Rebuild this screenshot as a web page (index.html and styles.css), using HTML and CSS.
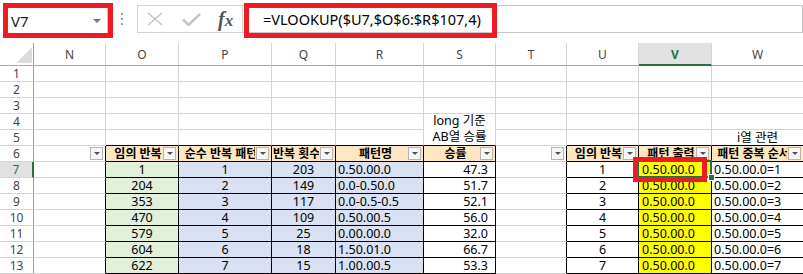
FILE: index.html
```html
<!DOCTYPE html>
<html lang="ko">
<head>
	<meta charset="UTF-8">
	<title>VLOOKUP</title>
	<link rel="stylesheet" href="styles.css">
</head>
<body>
	<div class="fbar">
		<div class="namebox"><span>V7</span><i class="caret"></i></div>
		<div class="grip"><i></i><i></i><i></i></div>
		<div class="fbtns">
			<svg class="ico-x" width="16" height="14" viewBox="0 0 16 14"><path d="M1 1L15 13M15 1L1 13" stroke="#c6c6c6" stroke-width="1.6" fill="none"/></svg>
			<svg class="ico-ok" width="19" height="13" viewBox="0 0 19 13"><path d="M1 6.5L6.5 12L18 1" stroke="#c6c6c6" stroke-width="2.6" fill="none"/></svg>
			<span class="fx">f<span>x</span></span>
		</div>
		<div class="finput">=VLOOKUP($U7,$O$6:$R$107,4)</div>
	</div>

	<div class="sheet">
		<div class="row head">
			<div class="corner"><i></i></div>
			<div class="col">N</div><div class="col">O</div><div class="col">P</div><div class="col">Q</div><div class="col">R</div>
			<div class="col">S</div><div class="col">T</div><div class="col">U</div><div class="col sel">V</div><div class="col">W</div>
		</div>
		<div class="row">
			<div class="rh">1</div>
			<div class="c"></div><div class="c"></div><div class="c"></div><div class="c"></div><div class="c"></div>
			<div class="c"></div><div class="c"></div><div class="c"></div><div class="c"></div><div class="c"></div>
		</div>
		<div class="row">
			<div class="rh">2</div>
			<div class="c"></div><div class="c"></div><div class="c"></div><div class="c"></div><div class="c"></div>
			<div class="c"></div><div class="c"></div><div class="c"></div><div class="c"></div><div class="c"></div>
		</div>
		<div class="row">
			<div class="rh">3</div>
			<div class="c"></div><div class="c"></div><div class="c"></div><div class="c"></div><div class="c"></div>
			<div class="c"></div><div class="c"></div><div class="c"></div><div class="c"></div><div class="c"></div>
		</div>
		<div class="row">
			<div class="rh">4</div>
			<div class="c"></div><div class="c"></div><div class="c"></div><div class="c"></div><div class="c"></div>
			<div class="c nob"></div><div class="c"></div><div class="c"></div><div class="c"></div><div class="c"></div>
		</div>
		<div class="row">
			<div class="rh">5</div>
			<div class="c"></div><div class="c t-t"></div><div class="c t-t"></div><div class="c t-t"></div><div class="c t-t"></div>
			<div class="c t-t wrap"><span>long 기준</span><span>AB열 승률</span></div>
			<div class="c"></div><div class="c t-t"></div><div class="c t-t"></div><div class="c t-t ctr">i열 관련</div>
		</div>
		<div class="row">
			<div class="rh">6</div>
			<div class="c hd t-l"><span class="lbl"></span><b class="fb"></b></div>
			<div class="c hd t"><span class="lbl"><span>임의 반복</span></span><b class="fb"></b></div>
			<div class="c hd t"><span class="lbl"><span>순수 반복 패턴</span></span><b class="fb"></b></div>
			<div class="c hd t"><span class="lbl left"><span>반복 횟수</span></span><b class="fb"></b></div>
			<div class="c hd t"><span class="lbl"><span>패턴명</span></span><b class="fb"></b></div>
			<div class="c hd t"><span class="lbl"><span>승률</span></span><b class="fb"></b></div>
			<div class="c hd t-l"><span class="lbl"></span><b class="fb"></b></div>
			<div class="c hd t"><span class="lbl"><span>임의 반복</span></span><b class="fb"></b></div>
			<div class="c hd t"><span class="lbl"><span>패턴 출력</span></span><b class="fb"></b></div>
			<div class="c hd t"><span class="lbl"><span>패턴 중복 순서</span></span><b class="fb"></b></div>
		</div>
		<div class="row">
			<div class="rh sel">7</div>
			<div class="c t-l"></div>
			<div class="c t g ctr">1</div><div class="c t b ctr">1</div><div class="c t b ctr">203</div><div class="c t b">0.50.00.0</div><div class="c t num">47.3</div>
			<div class="c t-l"></div>
			<div class="c t ctr">1</div><div class="c t y active">0.50.00.0</div><div class="c t">0.50.00.0=1</div>
		</div>
		<div class="row">
			<div class="rh">8</div>
			<div class="c t-l"></div>
			<div class="c t g ctr">204</div><div class="c t b ctr">2</div><div class="c t b ctr">149</div><div class="c t b">0.0-0.50.0</div><div class="c t num">51.7</div>
			<div class="c t-l"></div>
			<div class="c t ctr">2</div><div class="c t y">0.50.00.0</div><div class="c t">0.50.00.0=2</div>
		</div>
		<div class="row">
			<div class="rh">9</div>
			<div class="c t-l"></div>
			<div class="c t g ctr">353</div><div class="c t b ctr">3</div><div class="c t b ctr">117</div><div class="c t b">0.0-0.5-0.5</div><div class="c t num">52.1</div>
			<div class="c t-l"></div>
			<div class="c t ctr">3</div><div class="c t y">0.50.00.0</div><div class="c t">0.50.00.0=3</div>
		</div>
		<div class="row">
			<div class="rh">10</div>
			<div class="c t-l"></div>
			<div class="c t g ctr">470</div><div class="c t b ctr">4</div><div class="c t b ctr">109</div><div class="c t b">0.50.00.5</div><div class="c t num">56.0</div>
			<div class="c t-l"></div>
			<div class="c t ctr">4</div><div class="c t y">0.50.00.0</div><div class="c t">0.50.00.0=4</div>
		</div>
		<div class="row">
			<div class="rh">11</div>
			<div class="c t-l"></div>
			<div class="c t g ctr">579</div><div class="c t b ctr">5</div><div class="c t b ctr">25</div><div class="c t b">0.00.00.0</div><div class="c t num">32.0</div>
			<div class="c t-l"></div>
			<div class="c t ctr">5</div><div class="c t y">0.50.00.0</div><div class="c t">0.50.00.0=5</div>
		</div>
		<div class="row">
			<div class="rh">12</div>
			<div class="c t-l"></div>
			<div class="c t g ctr">604</div><div class="c t b ctr">6</div><div class="c t b ctr">18</div><div class="c t b">1.50.01.0</div><div class="c t num">66.7</div>
			<div class="c t-l"></div>
			<div class="c t ctr">6</div><div class="c t y">0.50.00.0</div><div class="c t">0.50.00.0=6</div>
		</div>
		<div class="row">
			<div class="rh">13</div>
			<div class="c t-l"></div>
			<div class="c t g ctr">622</div><div class="c t b ctr">7</div><div class="c t b ctr">15</div><div class="c t b">1.00.00.5</div><div class="c t num">53.3</div>
			<div class="c t-l"></div>
			<div class="c t ctr">7</div><div class="c t y">0.50.00.0</div><div class="c t">0.50.00.0=7</div>
		</div>
	</div>

	<div class="mark m-name"></div>
	<div class="mark m-formula"></div>
	<div class="mark m-cell"></div>
</body>
</html>
```

FILE: styles.css
```css
*{margin:0;padding:0;box-sizing:border-box;}
body{width:803px;height:274px;overflow:hidden;background:#fff;font-family:"Noto Sans","Noto Sans CJK KR",sans-serif;color:#000;}

/* formula bar */
.fbar{height:43px;display:flex;align-items:flex-start;padding-top:5px;}
.namebox{margin:2px 0 0 7px;width:101px;height:27px;border:1px solid #c6c6c6;display:flex;align-items:center;padding-left:3px;font-size:15px;color:#222;}
.caret{margin:0 6px 0 auto;width:0;height:0;border-top:4px solid #777;border-left:4px solid transparent;border-right:4px solid transparent;}
.grip{margin-left:13px;height:28px;display:flex;flex-direction:column;justify-content:center;gap:3px;}
.grip i{display:block;width:2px;height:2px;background:#a0a0a0;}
.fbtns{margin-left:14px;width:106px;height:28px;border:1px solid #d2d2d2;display:flex;align-items:center;padding-left:9px;}
.ico-ok{margin-left:19px;}
.fx{margin-left:17px;font-family:"Liberation Serif",serif;font-style:italic;font-weight:bold;font-size:20px;color:#555;line-height:1;}
.fx span{font-size:17px;}
.finput{flex:1;height:28px;border:1px solid #c6c6c6;border-left:none;padding-left:20px;font-size:14.5px;line-height:26px;}

/* grid */
.row{display:grid;grid-template-columns:34px 72px 73px 93px 64px 88px 72px 71px 72px 73px 92px;grid-template-rows:100%;height:16px;font-size:12.5px;line-height:15px;}
.row.head{height:23px;}
.corner{border-right:1px solid #9f9f9f;border-bottom:1px solid #a6a6a6;display:flex;justify-content:flex-end;align-items:flex-end;padding:0 1px 2px 0;}
.corner i{width:0;height:0;border-left:16px solid transparent;border-bottom:16px solid #dcdcdc;}
.col{border-right:1px solid #d4d4d4;border-bottom:1px solid #a6a6a6;display:flex;align-items:center;justify-content:center;font-size:12px;color:#444;padding-top:1px;}
.col.sel{background:#e1e1e1;color:#217346;border-bottom:2px solid #217346;font-weight:bold;}
.rh{border-right:1px solid #9f9f9f;border-bottom:1px solid #d4d4d4;display:flex;align-items:center;justify-content:center;font-size:12px;color:#444;}
.rh.sel{background:#e1e1e1;color:#217346;border-right:2px solid #217346;}

.c{border-right:1px solid #d4d4d4;border-bottom:1px solid #d4d4d4;display:flex;align-items:center;padding:0 2px;white-space:nowrap;overflow:hidden;}
.c.nob{border-bottom-color:#fff;}
.c.t{border-color:#000;}
.c.t-l{border-right-color:#000;}
.c.t-t{border-bottom-color:#000;}
.ctr{justify-content:center;}
.num{justify-content:flex-end;padding-right:7px;}
.g{background:#e2efda;}
.b{background:#d9e1f2;}
.y{background:#ffff00;padding-left:3px;}
.wrap{flex-direction:column;justify-content:flex-end;overflow:visible;}
.wrap span{display:block;height:16px;line-height:16px;}

/* table header cells */
.hd{padding:0;background:none;}
.hd.t{background:#fde7c2;}
.hd .lbl{flex:1;min-width:0;overflow:hidden;font-weight:bold;font-size:12px;}
.hd .lbl span{display:block;width:calc(100% + 8px);text-align:center;}
.hd .lbl.left span{text-align:left;padding-left:1px;}
.fb{flex:none;width:13px;height:13px;margin:0 2px 0 1px;border:1px solid #b4b4b4;background:#f6f6f6;display:flex;align-items:center;justify-content:center;}
.fb::after{content:"";width:0;height:0;border-top:3px solid #505050;border-left:3px solid transparent;border-right:3px solid transparent;}

/* active cell */
.active{position:relative;overflow:visible;}
.active::after{content:"";position:absolute;left:-2px;top:-2px;right:-1px;bottom:-1px;border:2px solid #217346;}
.active::before{content:"";position:absolute;right:-3px;bottom:-3px;width:5px;height:5px;background:#217346;outline:1px solid #fff;z-index:1;}

/* red annotation boxes */
.mark{position:absolute;border:5px solid #ed1c24;}
.m-name{left:3px;top:3px;width:110px;height:35px;}
.m-formula{left:244px;top:3px;width:253px;height:35px;}
.m-cell{left:633px;top:157px;width:74px;height:25px;}
```
